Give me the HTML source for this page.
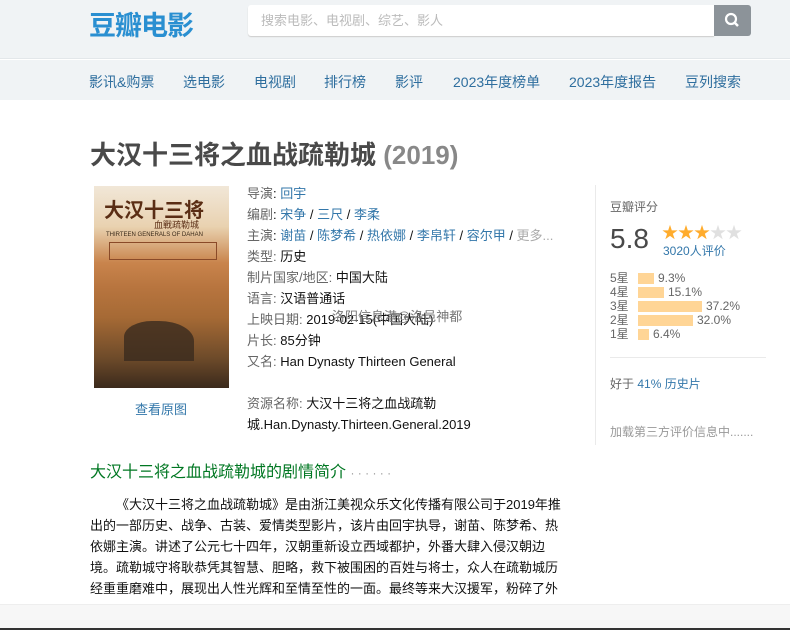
<!DOCTYPE html>
<html><head><meta charset="utf-8">
<style>
*{margin:0;padding:0;box-sizing:border-box}
body{width:790px;height:630px;overflow:hidden;background:#fff;font-family:"Liberation Sans","Noto Sans CJK SC",sans-serif;font-size:13px;color:#111;position:relative}
a{color:#37a;text-decoration:none}
.hd{position:absolute;left:0;top:0;width:790px;height:59px;background:#f0f3f5;border-bottom:1px solid #e3e7ea}
.logo{position:absolute;left:89px;top:4px;font-size:27px;font-weight:bold;color:#2a8fd1;letter-spacing:-1px}
.search{position:absolute;left:248px;top:5px;width:466px;height:31px;background:#fff;border-radius:3px 0 0 3px;box-shadow:0 1px 1px #ccc;color:#bbb;font-size:13px;line-height:31px;padding-left:13px}
.btn{position:absolute;left:714px;top:5px;width:37px;height:31px;background:#8c9399;border-radius:0 3px 3px 0}
.nav{position:absolute;left:0;top:60px;width:790px;height:40px;background:#f0f3f5}
.nav a{position:absolute;top:12px;font-size:14px;color:#2e6e9e}
.title{position:absolute;left:90px;top:135px;font-size:26px;font-weight:bold;color:#494949}
.title span{color:#888}
.poster{position:absolute;left:94px;top:186px;width:135px;height:202px;background:linear-gradient(180deg,#f1e7d8 0%,#e9d2b0 20%,#c9844c 38%,#b8753f 50%,#a66a35 65%,#6e4b2a 85%,#3b2a1c 100%);overflow:hidden}
.info{position:absolute;left:247px;top:183px;line-height:21px;color:#111}
.info .pl{color:#666}
.rt{position:absolute;left:595px;top:185px;width:170px;border-left:1px solid #eaeaea;height:260px}
.bar{position:absolute;height:11px;background:#ffd596}
.sm{font-size:12px;color:#666}
.syn-h{position:absolute;left:90px;top:458px;font-size:16px;color:#007722}
.syn{position:absolute;left:90px;top:494px;width:475px;line-height:21px;font-size:13px;text-indent:26px;color:#111}
</style></head><body>
<div class="hd">
<div class="logo">豆瓣电影</div>
<div class="search">搜索电影、电视剧、综艺、影人</div>
<div class="btn"><svg width="37" height="31"><circle cx="17" cy="14" r="5" stroke="#fff" stroke-width="2.2" fill="none"/><line x1="20.5" y1="17.5" x2="24" y2="21" stroke="#fff" stroke-width="2.5"/></svg></div>
</div>
<div class="nav">
<a style="left:89px">影讯&amp;购票</a><a style="left:183px">选电影</a><a style="left:254px">电视剧</a><a style="left:324px">排行榜</a><a style="left:395px">影评</a><a style="left:453px">2023年度榜单</a><a style="left:569px">2023年度报告</a><a style="left:685px">豆列搜索</a>
</div>
<div class="title">大汉十三将之血战疏勒城 <span>(2019)</span></div>
<div class="poster">
<div style="position:absolute;left:10px;top:8px;font-size:20px;font-weight:bold;color:#5a2d14">大汉十三将</div>
<div style="position:absolute;left:60px;top:32px;font-size:9px;color:#5a2d14">血戰疏勒城</div>
<div style="position:absolute;left:12px;top:46px;font-size:6px;color:#3a2a1a;white-space:nowrap">THIRTEEN GENERALS OF DAHAN</div>
<div style="position:absolute;left:15px;top:56px;width:108px;height:18px;border:1px solid #8a4a28"></div>
<div style="position:absolute;left:30px;top:135px;width:70px;height:40px;background:#3a2a1e;border-radius:40% 50% 0 0;opacity:.8"></div>
</div>
<a style="position:absolute;left:135px;top:399px">查看原图</a>
<div class="info">
<div><span class="pl">导演</span>: <a>回宇</a></div>
<div><span class="pl">编剧</span>: <a>宋争</a> / <a>三尺</a> / <a>李柔</a></div>
<div><span class="pl">主演</span>: <a>谢苗</a> / <a>陈梦希</a> / <a>热依娜</a> / <a>李帛轩</a> / <a>容尔甲</a> / <span style="color:#aaa">更多...</span></div>
<div><span class="pl">类型:</span> 历史</div>
<div><span class="pl">制片国家/地区:</span> 中国大陆</div>
<div><span class="pl">语言:</span> 汉语普通话</div>
<div><span class="pl">上映日期:</span> 2019-02-15(中国大陆)</div>
<div><span class="pl">片长:</span> 85分钟</div>
<div><span class="pl">又名:</span> Han Dynasty Thirteen General</div>
<div>&nbsp;</div>
<div><span class="pl">资源名称:</span> 大汉十三将之血战疏勒</div>
<div>城.Han.Dynasty.Thirteen.General.2019</div>
</div>
<div style="position:absolute;left:332px;top:306px;color:#777;font-size:13px">洛阳信息港@洛邑神都</div>
<div class="rt">
<div class="sm" style="position:absolute;left:14px;top:13px">豆瓣评分</div>
<div style="position:absolute;left:14px;top:38px;font-size:28px;color:#494949">5.8</div>
<div style="position:absolute;left:66px;top:34px;font-size:16px;letter-spacing:0px"><span style="color:#ffac2d">★★★</span><span style="color:#e0e0e0">★★</span></div>
<a style="position:absolute;left:67px;top:57px;font-size:12px">3020人评价</a>
<div class="sm" style="position:absolute;left:14px;top:86px;line-height:14px">5星<br>4星<br>3星<br>2星<br>1星</div>
<div class="bar" style="left:42px;top:88px;width:16px"></div><div class="sm" style="position:absolute;left:62px;top:86px">9.3%</div>
<div class="bar" style="left:42px;top:102px;width:26px"></div><div class="sm" style="position:absolute;left:72px;top:100px">15.1%</div>
<div class="bar" style="left:42px;top:116px;width:64px"></div><div class="sm" style="position:absolute;left:110px;top:114px">37.2%</div>
<div class="bar" style="left:42px;top:130px;width:55px"></div><div class="sm" style="position:absolute;left:101px;top:128px">32.0%</div>
<div class="bar" style="left:42px;top:144px;width:11px"></div><div class="sm" style="position:absolute;left:57px;top:142px">6.4%</div>
<div style="position:absolute;left:14px;top:172px;width:156px;border-top:1px solid #eaeaea"></div>
<div class="sm" style="position:absolute;left:14px;top:190px">好于 <a>41% 历史片</a></div>
<div class="sm" style="position:absolute;left:14px;top:238px;color:#999">加载第三方评价信息中.......</div>
</div>
<div class="syn-h">大汉十三将之血战疏勒城的剧情简介 <span style="color:#999;font-size:12px">· · · · · ·</span></div>
<div class="syn">《大汉十三将之血战疏勒城》是由浙江美视众乐文化传播有限公司于2019年推出的一部历史、战争、古装、爱情类型影片，该片由回宇执导，谢苗、陈梦希、热依娜主演。讲述了公元七十四年，汉朝重新设立西域都护，外番大肆入侵汉朝边境。疏勒城守将耿恭凭其智慧、胆略，救下被围困的百姓与将士，众人在疏勒城历经重重磨难中，展现出人性光辉和至情至性的一面。最终等来大汉援军，粉碎了外</div>
<div style="position:absolute;left:0;top:604px;width:790px;height:24px;background:#f7f7f7;border-top:1px solid #eee"></div>
<div style="position:absolute;left:0;top:628px;width:790px;height:2px;background:#333"></div>
</body></html>
